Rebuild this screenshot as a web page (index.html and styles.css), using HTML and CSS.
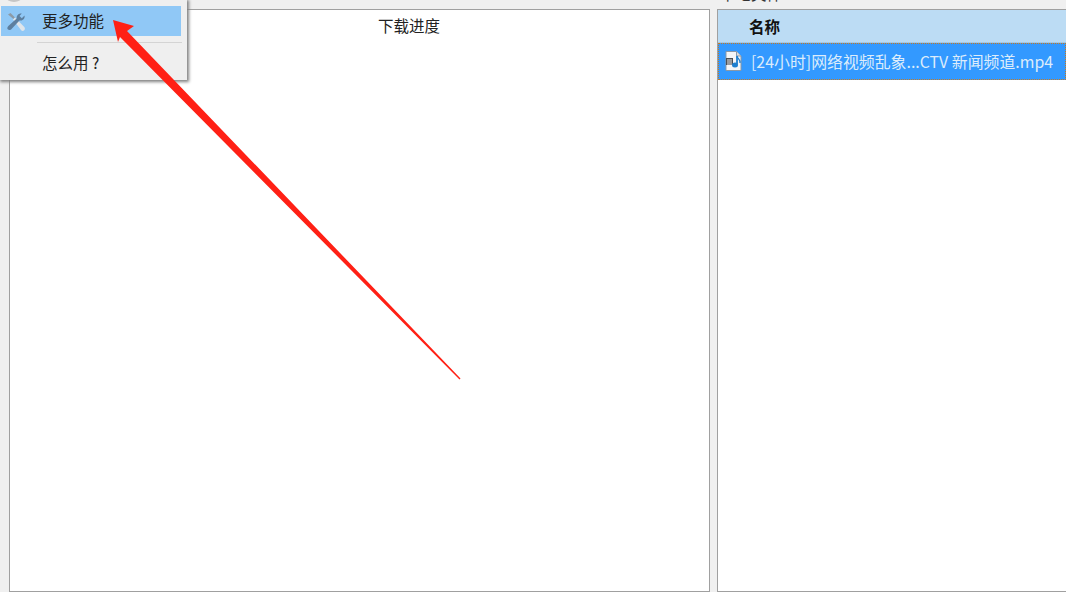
FILE: index.html
```html
<!DOCTYPE html>
<html lang="zh-CN">
<head>
    <meta charset="UTF-8">
    <title>下载进度</title>
    <link rel="stylesheet" href="styles.css">
</head>
<body>

    <div class="main">
        <!-- Progress panel -->
        <section class="progress-col">
            <div class="panel">
                <div class="progress-title">下载进度</div>
            </div>
        </section>

        <!-- File list -->
        <section class="files-col">
            <div class="files-label">本地文件</div>
            <div class="panel files-panel">
                <div class="files-head">名称</div>
                <div class="file-row">
                    <svg class="file-icon" width="17" height="20" viewBox="0 0 17 20">
                        <path d="M1 .5H11.500L16 5V19.500H1Z" fill="#f4f6f8" stroke="#8b98a6"/>
                        <path d="M11.500 .5V5H16" fill="#d5dce3" stroke="#8b98a6"/>
                        <rect x="1" y="7" width="7" height="7" fill="#4a4f55"/>
                        <path d="M2 9H7M2 11H7M2 13H7" stroke="#e6e8ea"/>
                        <path d="M12 5V13.500" stroke="#1d7fd0" stroke-width="1.8"/>
                        <path d="M12 5.500C13 8 15.500 8.500 15 12" fill="none" stroke="#1d7fd0" stroke-width="1.300"/>
                        <ellipse cx="10" cy="14" rx="3" ry="2.500" fill="#1d7fd0"/>
                    </svg>
                    <span>[24小时]网络视频乱象...CTV 新闻频道.mp4</span>
                </div>
            </div>
        </section>
    </div>

    <!-- Popup menu -->
    <div class="menu">
        <div class="menu-dot"></div>
        <div class="menu-item active">
            <svg class="menu-icon" width="20" height="20" viewBox="0 0 20 20">
                <path d="M2 2.500L4.500 1L9 5.500L7.500 7Z" fill="#8d9aa6"/>
                <path d="M7 7.500L9 5.500L18.300 15C19.300 16.200 19 17.700 18 18.500C17 19.300 15.700 19 15 18Z" fill="#dfe5ea"/>
                <path d="M18.500 3.500C19.200 6 17.200 8.700 14.500 8.500L13.500 8.400L6 16.500C4.800 18 3.200 18.600 2 17.600C.8 16.500 1.300 15 2.600 13.800L10.700 6.400C10.300 3.500 12.600 1 15.800 1.500L13.500 4L15.800 6.300Z" fill="#5d7f9f"/>
            </svg>
            <span>更多功能</span>
        </div>
        <div class="menu-sep"></div>
        <div class="menu-item">
            <span>怎么用 ?</span>
        </div>
    </div>

    <!-- Red annotation arrow -->
    <svg class="arrow" width="1066" height="592" viewBox="0 0 1066 592">
        <path d="M113 20L134 26L127 31L460.500 378.500L459.500 379.500L120 37L118 42Z" fill="#ff2015"/>
    </svg>

</body>
</html>
```

FILE: styles.css
```css
/* General styles */
html, body {
    height: 100%;
}

body {
    margin: 0;
    overflow: hidden;
    background-color: #f0f0f0;
    font-family: "Noto Sans CJK SC", "Noto Sans", sans-serif;
    font-size: 15.5px;
    color: #222;
}

.main {
    display: flex;
    gap: 7px;
    height: 592px;
    padding-left: 9px;
}

.panel {
    background-color: #fff;
    border: 1px solid #a0a0a0;
    flex: 1;
}

/* Progress panel */
.progress-col {
    display: flex;
    width: 701px;
    padding-top: 9px;
}

.progress-title {
    height: 32px;
    padding-left: 99px;
    line-height: 30px;
    text-align: center;
}

/* File list */
.files-col {
    display: flex;
    flex-direction: column;
    flex: 1;
}

/* only the bottom of this label shows above the panel */
.files-label {
    height: 9px;
    padding-left: 3px;
    line-height: 0;
    transform: translateY(-7px);
    color: #333;
}

.files-panel {
    border-right: none;
}

.files-head {
    height: 32px;
    padding-left: 31px;
    line-height: 33px;
    font-weight: bold;
    color: #111;
    background-color: #bcdcf4;
    border-bottom: 1px solid #a9c8e0;
}

.file-row {
    display: flex;
    align-items: center;
    height: 34px;
    padding-left: 6px;
    padding-bottom: 1px;
    background-color: #3399ff;
    border: 1px dotted #c87a20;
    color: #dcecfb;
    font-size: 15.9px;
    line-height: 33px;
}

.file-icon {
    margin-right: 9px;
}

/* Popup menu */
.menu {
    position: absolute;
    top: 0;
    left: 0;
    width: 187px;
    height: 80px;
    padding-top: 6px;
    box-sizing: border-box;
    background-color: #efefef;
    box-shadow: 1px 1px 3px 1px #808080;
}

.menu-dot {
    position: absolute;
    top: -8px;
    left: 6px;
    width: 16px;
    height: 10px;
    border-radius: 50%;
    background-color: #c6c6c6;
}

.menu-item {
    position: relative;
    width: 180px;
    height: 30px;
    margin-left: 1px;
    padding-left: 41px;
    box-sizing: border-box;
    line-height: 29px;
}

.menu-item.active {
    background-color: #90c8f6;
}

.menu-icon {
    position: absolute;
    top: 6px;
    left: 5px;
}

.menu-sep {
    height: 1px;
    margin: 6px 5px 5px 37px;
    background-color: #d4d4d4;
}

/* Arrow overlay */
.arrow {
    position: absolute;
    top: 0;
    left: 0;
    pointer-events: none;
}
```
